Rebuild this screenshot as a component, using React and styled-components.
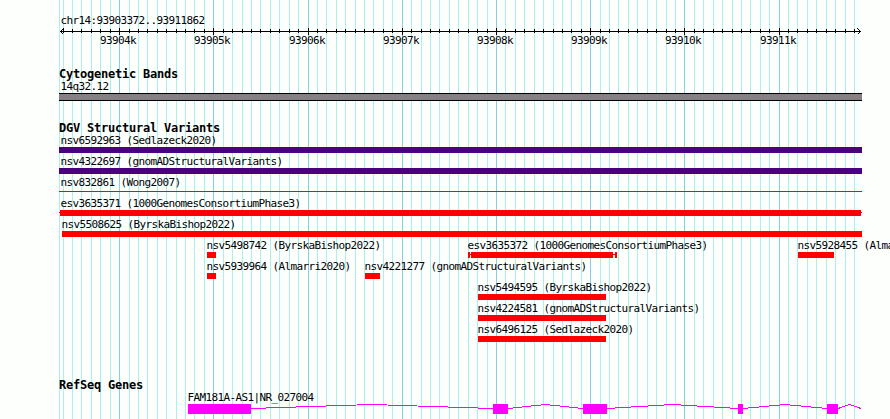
import React from "react";
import styled, { createGlobalStyle } from "styled-components";

const ORIGIN = 59;
const END = 862;
const K_START = 119.6;
const K_STEP = 94.22;

const PageStyle = createGlobalStyle`
  html, body { margin: 0; padding: 0; background: #fdfffd; overflow: hidden; }
`;

const Browser = styled.main`
  position: relative;
  isolation: isolate;
  width: 890px;
  height: 419px;
  overflow: hidden;
  background: #fdfffd;
  color: #000;
  display: flex;
  flex-direction: column;
  font-family: "DejaVu Sans Mono", monospace;
  font-kerning: none;
`;

const GridLines = styled.svg`
  position: absolute;
  inset: 0;
  z-index: -1;
`;

const Region = styled.div`
  margin: 14px 0 0 60.5px;
  height: 14px;
  line-height: 14px;
  font-size: 11px;
  letter-spacing: -0.622px;
`;

const Scale = styled.svg`
  display: block;
  height: 7px;
  flex: none;
`;

const ScaleLabels = styled.div`
  display: grid;
  height: 12px;
`;

const ScaleLabel = styled.span`
  grid-area: 1 / 1;
  margin-left: ${(p) => p.$x}px;
  line-height: 12px;
  font-size: 11px;
  letter-spacing: -0.622px;
`;

const Track = styled.section`
  display: flex;
  flex-direction: column;
  flex: none;
  margin-top: ${(p) => p.$gap}px;
`;

const TrackTitle = styled.h2`
  margin: 0 0 0 ${ORIGIN}px;
  height: 13px;
  line-height: 15px;
  font-size: 12px;
  font-weight: 700;
  letter-spacing: -0.224px;
`;

const Lane = styled.div`
  display: grid;
  height: 21px;
`;

const Feature = styled.div`
  grid-area: 1 / 1;
  margin-left: ${(p) => p.$x}px;
  width: ${(p) => p.$w}px;
  display: flex;
  flex-direction: column;
`;

const Label = styled.span`
  height: 13px;
  line-height: 13px;
  margin-left: ${(p) => p.$shift ?? -0.5}px;
  font-size: 11px;
  letter-spacing: -0.622px;
  white-space: pre;
`;

const Bar = styled.div`
  height: 6px;
  background: ${(p) => p.$color};
`;

const ThinBar = styled.div`
  height: 1px;
  margin-top: 2px;
  background: #f00;
`;

const Band = styled.div`
  margin-left: ${ORIGIN}px;
  width: ${END - ORIGIN}px;
  height: 8px;
  box-sizing: border-box;
  background: #848084;
  border: solid #000;
  border-width: 1px 0;
`;

const Glyph = styled.svg`
  display: block;
  flex: none;
  shape-rendering: crispEdges;
`;

const RED = "#ff0000";
const INDIGO = "#4b0082";

const lanes = [
  [{ name: "nsv6592963 (Sedlazeck2020)", x: 59, end: 862, color: INDIGO, shift: 1.5 }],
  [{ name: "nsv4322697 (gnomADStructuralVariants)", x: 59, end: 862, color: INDIGO, shift: 1.5 }],
  [{ name: "nsv832861 (Wong2007)", x: 59, end: 862, kind: "thin", shift: 1.5 }],
  [{ name: "esv3635371 (1000GenomesConsortiumPhase3)", x: 59, end: 862, kind: "clipped", shift: 1.5 }],
  [{ name: "nsv5508625 (ByrskaBishop2022)", x: 62, end: 862 }],
  [
    { name: "nsv5498742 (ByrskaBishop2022)", x: 207, end: 216 },
    { name: "esv3635372 (1000GenomesConsortiumPhase3)", x: 468, end: 617, kind: "capped" },
    { name: "nsv5928455 (Almarri2020)", x: 798, end: 834 },
  ],
  [
    { name: "nsv5939964 (Almarri2020)", x: 207, end: 216 },
    { name: "nsv4221277 (gnomADStructuralVariants)", x: 365, end: 380 },
  ],
  [{ name: "nsv5494595 (ByrskaBishop2022)", x: 478, end: 606 }],
  [{ name: "nsv4224581 (gnomADStructuralVariants)", x: 478, end: 606 }],
  [{ name: "nsv6496125 (Sedlazeck2020)", x: 478, end: 606 }],
];

const ticks = Array.from({ length: 85 }, (_, n) => {
  const i = n - 6;
  return { x: Math.floor(K_START + (i * K_STEP) / 10), major: i % 10 === 0 };
}).filter((t) => t.x < 860);

const exons = [
  [188, 251],
  [493, 508],
  [583, 607],
  [738, 743],
  [827, 838],
];

function FeatureShape({ kind, color = RED, w }) {
  if (kind === "thin") return <ThinBar />;
  if (kind === "clipped") {
    return (
      <Glyph width={w} height="6" fill={RED}>
        <rect x="0" y="2" width={w} height="1" />
        <rect x="1" y="0" width={w - 2} height="6" />
      </Glyph>
    );
  }
  if (kind === "capped") {
    return (
      <Glyph width={w} height="6" fill={RED}>
        <rect x="0" y="0" width="2" height="6" />
        <rect x="0" y="2" width={w} height="1" />
        <rect x="3" y="0" width={w - 7} height="6" />
        <rect x={w - 2} y="0" width="2" height="6" />
      </Glyph>
    );
  }
  return <Bar $color={color} />;
}

function Gene() {
  const introns = exons.map(([, from], i) => {
    const to = exons[i + 1]?.[0] ?? 861;
    return `${from},4.5 ${(from + to) / 2},0.5 ${to},4.5`;
  });
  return (
    <Glyph width="890" height="10">
      {introns.map((points) => (
        <polyline key={points} points={points} fill="none" stroke="#f0f" />
      ))}
      {exons.map(([from, to]) => (
        <rect key={from} x={from} width={to - from} height="10" fill="#f0f" />
      ))}
    </Glyph>
  );
}

export default function App() {
  return (
    <Browser>
      <PageStyle />
      <GridLines width="890" height="419" shapeRendering="crispEdges">
        <rect x={ORIGIN} width="1" height="419" fill="#afeeee" />
        {ticks.map((t) => (
          <rect key={t.x} x={t.x} width="1" height="419" fill={t.major ? "#87ceeb" : "#afeeee"} />
        ))}
      </GridLines>

      <Region>chr14:93903372..93911862</Region>
      <Scale width="890" height="7" shapeRendering="crispEdges">
        <rect x="60" y="3" width="801" height="1" />
        {ticks.map((t) => (
          <rect key={t.x} x={t.x} y={t.major ? 0 : 1} width="1" height={t.major ? 7 : 4} />
        ))}
        <path d="M63.5 0.5L60.5 3.5L63.5 6.5M857.5 0.5L860.5 3.5L857.5 6.5" fill="none" stroke="#000" />
      </Scale>
      <ScaleLabels>
        {Array.from({ length: 8 }, (_, i) => (
          <ScaleLabel key={i} $x={Math.floor(K_START + i * K_STEP) - 19}>
            {93904 + i}k
          </ScaleLabel>
        ))}
      </ScaleLabels>

      <Track $gap={20}>
        <TrackTitle>Cytogenetic Bands</TrackTitle>
        <Label $shift={60.5}>14q32.12</Label>
        <Band />
      </Track>

      <Track $gap={20}>
        <TrackTitle>DGV Structural Variants</TrackTitle>
        {lanes.map((lane, i) => (
          <Lane key={i}>
            {lane.map((f) => (
              <Feature key={f.name} $x={f.x} $w={f.end - f.x}>
                <Label $shift={f.shift}>{f.name}</Label>
                <FeatureShape kind={f.kind} color={f.color} w={f.end - f.x} />
              </Feature>
            ))}
          </Lane>
        ))}
      </Track>

      <Track $gap={34}>
        <TrackTitle>RefSeq Genes</TrackTitle>
        <Label $shift={187.5}>FAM181A-AS1|NR_027004</Label>
        <Gene />
      </Track>
    </Browser>
  );
}
